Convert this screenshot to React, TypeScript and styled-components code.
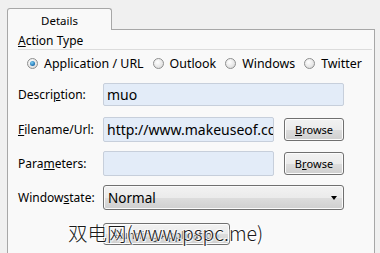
import React from "react";
import styled, { createGlobalStyle } from "styled-components";

const Global = createGlobalStyle`
  html, body { margin: 0; padding: 0; background: #f0f0f0; overflow: hidden; }
  body { font-family: "Segoe UI", "Noto Sans", "Open Sans", sans-serif; font-size: 12px; color: #000; }
`;

const Page = styled.div`
  position: relative;
  width: 380px;
  height: 253px;
  padding: 8px 0 0 7px;
  box-sizing: border-box;
`;

const Tab = styled.div`
  position: relative;
  z-index: 1;
  width: 105px;
  height: 22px;
  box-sizing: border-box;
  border: 1px solid #a7a7a7;
  border-bottom: none;
  border-radius: 3px 3px 0 0;
  background: #f9f9f9;
  display: flex;
  align-items: center;
  justify-content: center;
  font-size: 11.5px;
  padding-top: 1px;
`;

const Panel = styled.div`
  margin-top: -1px;
  width: 368px;
  height: 230px;
  box-sizing: border-box;
  border: 1px solid #a7a7a7;
  border-bottom: none;
  background: #f9f9f9;
  padding: 3px 0 0 10px;
`;

const GroupTitle = styled.div`
  height: 16px;
  line-height: 16px;
  font-size: 12px;
  border-bottom: 1px solid #dcdcdc;
  margin-right: 2px;
`;

const RadioRow = styled.div`
  display: flex;
  align-items: center;
  padding: 4px 0 0 9px;
  height: 18px;
  margin-bottom: 11px;
`;

const RadioItem = styled.label`
  display: flex;
  align-items: center;
  margin-right: 9px;
  font-size: 12.4px;
`;

const RadioDot = styled.span<{ $on?: boolean }>`
  width: 11px;
  height: 11px;
  border-radius: 50%;
  box-sizing: border-box;
  border: 1px solid #8e8f8f;
  background: radial-gradient(circle at 40% 35%, #ffffff 0%, #e6e6e6 60%, #cfcfcf 100%);
  margin-right: 6px;
  display: flex;
  align-items: center;
  justify-content: center;
  &::after {
    content: "";
    display: ${(p) => (p.$on ? "block" : "none")};
    width: 5px;
    height: 5px;
    border-radius: 50%;
    background: radial-gradient(circle at 40% 35%, #7fd0f5 0%, #1a6fb0 70%, #0d3f6e 100%);
  }
`;

const Rows = styled.div`
  display: grid;
  grid-template-columns: 85px 171px 10px 60px;
  grid-template-rows: 23px 11px 25px 9px 25px 9px 25px 13px 22px;
  align-items: center;
`;

const Label = styled.div<{ $row: number }>`
  grid-row: ${(p) => p.$row};
  grid-column: 1;
  font-size: 12px;
`;

const Input = styled.div<{ $span?: boolean; $row: number }>`
  grid-row: ${(p) => p.$row};
  grid-column: ${(p) => (p.$span ? "2 / span 3" : "2")};
  align-self: stretch;
  box-sizing: border-box;
  border: 1px solid #c7cfdb;
  border-radius: 2px;
  background: #e3ecf8;
  font-size: 14px;
  display: flex;
  align-items: center;
  padding-left: 3px;
  white-space: nowrap;
  overflow: hidden;
  text-overflow: clip;
`;

const Button = styled.div<{ $row: number }>`
  grid-row: ${(p) => p.$row};
  grid-column: 4;
  height: 23px;
  box-sizing: border-box;
  border: 1px solid #707070;
  border-radius: 3px;
  background: linear-gradient(#f2f2f2 0%, #ebebeb 50%, #dddddd 51%, #cfcfcf 100%);
  box-shadow: inset 0 0 0 1px #fcfcfc;
  display: flex;
  align-items: center;
  justify-content: center;
  font-size: 11px;
`;

const Select = styled.div<{ $row: number }>`
  grid-row: ${(p) => p.$row};
  grid-column: 2 / span 3;
  align-self: stretch;
  box-sizing: border-box;
  border: 1px solid #707070;
  border-radius: 3px;
  background: linear-gradient(#f2f2f2 0%, #ebebeb 50%, #dddddd 51%, #cfcfcf 100%);
  box-shadow: inset 0 0 0 1px #fbfbfb;
  display: flex;
  align-items: center;
  justify-content: space-between;
  padding: 0 6px 0 4px;
  font-size: 13.5px;
`;

const Arrow = styled.span`
  width: 0;
  height: 0;
  border-left: 3.5px solid transparent;
  border-right: 3.5px solid transparent;
  border-top: 4px solid #000;
`;

const RunButton = styled.div`
  grid-row: 9;
  grid-column: 2 / span 2;
  width: 127px;
  align-self: stretch;
  box-sizing: border-box;
  border: 1px solid #707070;
  border-radius: 3px;
  background: linear-gradient(#f2f2f2 0%, #ebebeb 50%, #dddddd 51%, #cfcfcf 100%);
  box-shadow: inset 0 0 0 1px #fcfcfc;
  display: flex;
  align-items: center;
  justify-content: center;
  font-size: 11px;
  color: #333;
`;

const Watermark = styled.div`
  position: absolute;
  left: 68px;
  top: 218px;
  font-family: "Noto Sans CJK SC", "Noto Sans", sans-serif;
  font-size: 19.5px;
  font-weight: 300;
  color: #1a1a1a;
  text-shadow: 0 0 2px #fff, 0 0 2px #fff, 1px 1px 1px #fff, -1px -1px 1px #fff;
  white-space: nowrap;
`;

const U = styled.u`
  text-decoration: underline;
  text-underline-offset: 1px;
`;

export default function App() {
  return (
    <>
      <Global />
      <Page>
        <Tab>Details</Tab>
        <Panel>
          <GroupTitle>
            <U>A</U>ction Type
          </GroupTitle>
          <RadioRow>
            <RadioItem>
              <RadioDot $on />
              Application / URL
            </RadioItem>
            <RadioItem>
              <RadioDot />
              Outlook
            </RadioItem>
            <RadioItem>
              <RadioDot />
              Windows
            </RadioItem>
            <RadioItem>
              <RadioDot />
              Twitter
            </RadioItem>
          </RadioRow>
          <Rows>
            <Label $row={1}>
              Descri<U>p</U>tion:
            </Label>
            <Input $row={1} $span>muo</Input>
            <Label $row={3}>
              <U>F</U>ilename/Url:
            </Label>
            <Input $row={3}>http://www.makeuseof.com</Input>
            <Button $row={3}>
              <U>B</U>rowse
            </Button>
            <Label $row={5}>
              Para<U>m</U>eters:
            </Label>
            <Input $row={5} />
            <Button $row={5}>
              B<U>r</U>owse
            </Button>
            <Label $row={7}>
              Window<U>s</U>tate:
            </Label>
            <Select $row={7}>
              Normal
              <Arrow />
            </Select>
            <RunButton>Running Application</RunButton>
          </Rows>
        </Panel>
        <Watermark>双电网(www.pspc.me)</Watermark>
      </Page>
    </>
  );
}
